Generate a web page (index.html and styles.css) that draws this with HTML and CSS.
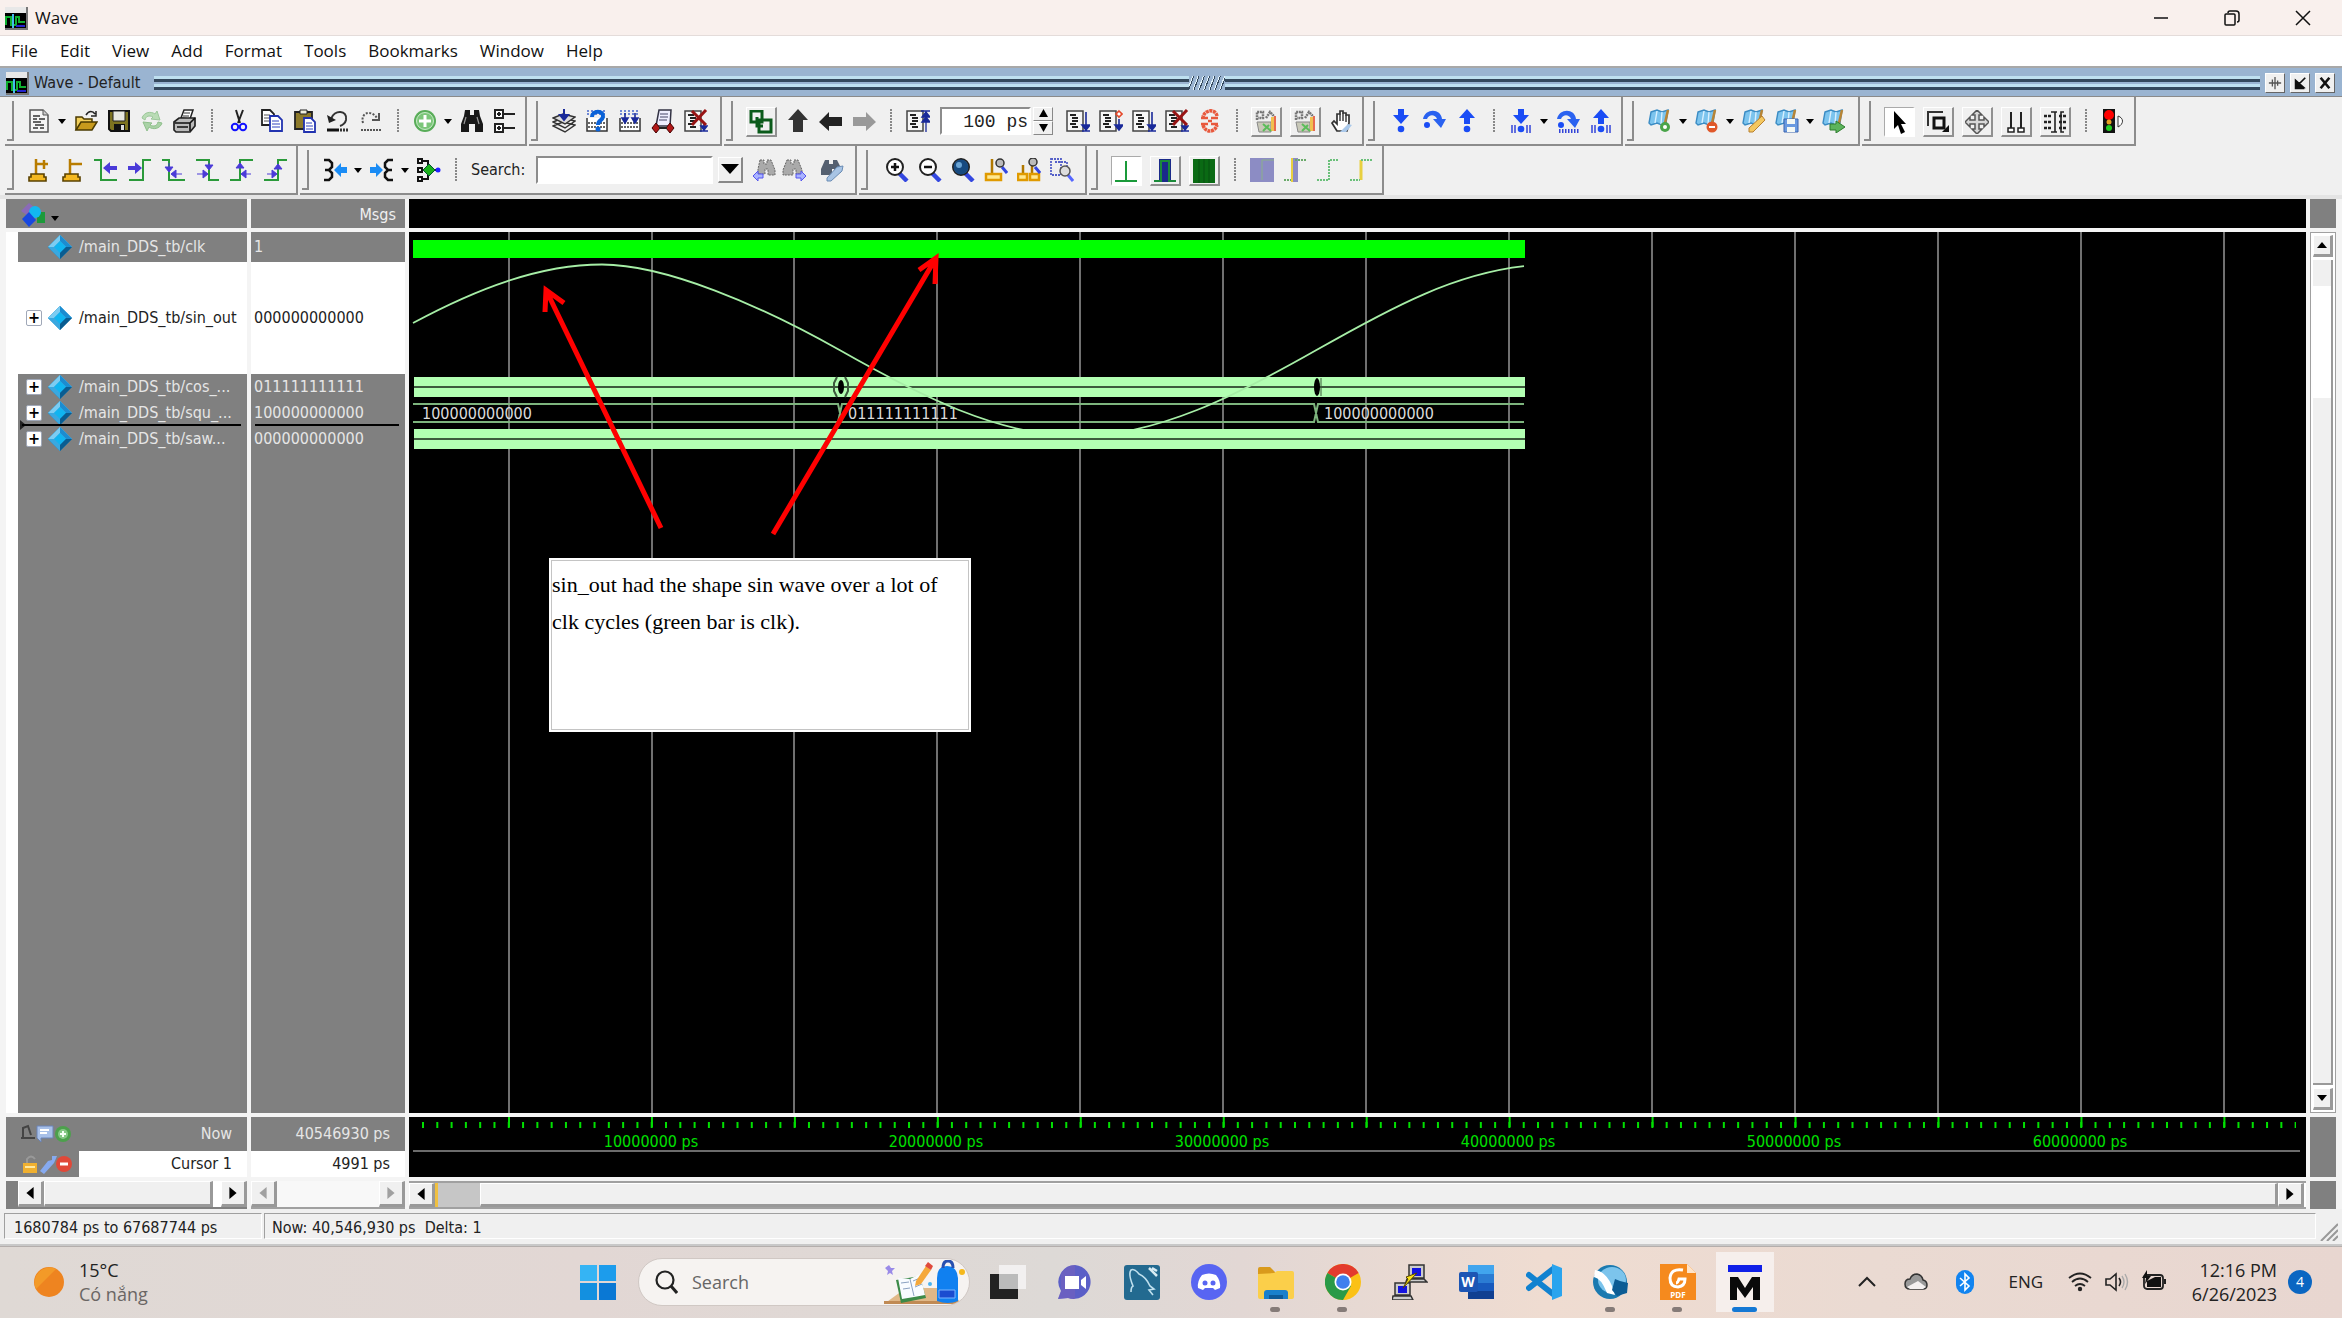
FILE: index.html
```html
<!DOCTYPE html>
<html lang="en">
<head>
<meta charset="utf-8">
<title>Wave</title>
<link rel="stylesheet" href="styles.css">
</head>
<body>
<svg class="sprite" xmlns="http://www.w3.org/2000/svg">
  <symbol id="app" viewBox="0 0 24 24"><path d="M1 1h22v22H1z" fill="#000"/><path d="M1 1h21v6H1z" fill="#e8e8e8"/><path d="M23 1v22H1" fill="none" stroke="#777" stroke-width="2"/><path d="M2 19v-8h5v8h5v-8h3v5h6" fill="none" stroke="#10b030" stroke-width="2"/><path d="M9 8v14" stroke="#4be" stroke-width="2"/><path d="M12 20h9" stroke="#22c" stroke-width="2"/></symbol>
  <symbol id="doc" viewBox="0 0 24 24"><path d="M3 1h13l5 5v17H3z" fill="#f4f4f4" stroke="#555" stroke-width="1.5"/><path d="M16 1v5h5" fill="#ccc" stroke="#555"/><path d="M6 7h7M6 10h4M12 10h6M6 13h8M8 16h9M6 19h5M13 19h4" stroke="#333" stroke-width="1.6"/></symbol>
  <symbol id="caret" viewBox="0 0 10 10"><path d="M1 3h8L5 8z" fill="#000"/></symbol>
  <symbol id="open" viewBox="0 0 24 24"><path d="M2 21V8h6l2 2h8v4" fill="#f2cf5a" stroke="#4a3a00" stroke-width="1.5"/><path d="M2 21l5-8h16l-5 8z" fill="#c79a1c" stroke="#4a3a00" stroke-width="1.5"/><path d="M12 6c3-5 7-4 9-1M22 2v5h-5" fill="none" stroke="#222" stroke-width="1.5"/></symbol>
  <symbol id="save" viewBox="0 0 24 24"><path d="M2 2h20v20H4l-2-2z" fill="#7d7320" stroke="#111" stroke-width="2"/><path d="M6 2h12v10H6z" fill="#e8e8e0" stroke="#222"/><path d="M7 15h11v7H7z" fill="#111"/><path d="M14 16h3v5h-3z" fill="#ddd"/></symbol>
  <symbol id="reload" viewBox="0 0 24 24"><path d="M2 9c2-6 9-7 13-4l2-3 3 9-9-1 2-2C9 6 6 7 5 11z" fill="#b9dcb5" stroke="#9cc79a"/><path d="M22 14c-2 6-9 7-13 4l-2 4-4-9 9 1-2 2c4 2 7 1 8-3z" fill="#a9d2a6" stroke="#8fbf8c"/></symbol>
  <symbol id="print" viewBox="0 0 24 24"><path d="M8 9l3-8h9l-3 9z" fill="#fff" stroke="#222" stroke-width="1.5"/><path d="M11 4h6M10 7h6" stroke="#333"/><path d="M1 13l5-4h16v8l-5 6H3l-2-2z" fill="#bbb" stroke="#222" stroke-width="1.7"/><path d="M2 14h15l5-5M17 14v8M4 18h11" fill="none" stroke="#111" stroke-width="1.6"/></symbol>
  <symbol id="cut" viewBox="0 0 24 24"><path d="M9 1l4 13M16 1l-5 13" stroke="#222" stroke-width="2"/><circle cx="8" cy="18" r="3.2" fill="none" stroke="#11f" stroke-width="2"/><circle cx="16" cy="18" r="3.2" fill="none" stroke="#11f" stroke-width="2"/></symbol>
  <symbol id="copy" viewBox="0 0 24 24"><path d="M2 1h8l4 4v11H2z" fill="#fff" stroke="#222" stroke-width="1.8"/><path d="M4 6h6M4 9h6M4 12h5" stroke="#555"/><path d="M10 7h8l4 4v11H10z" fill="#fff" stroke="#2233b0" stroke-width="1.8"/><path d="M12 12h7M12 15h8M12 18h8" stroke="#3344c0"/></symbol>
  <symbol id="paste" viewBox="0 0 24 24"><path d="M2 3h17v17H2z" fill="#8d7a2a" stroke="#222" stroke-width="1.8"/><path d="M7 1h7v4H7z" fill="#eed" stroke="#222"/><path d="M11 9h7l4 4v10H11z" fill="#fff" stroke="#2233b0" stroke-width="1.8"/><path d="M13 14h6M13 17h7M13 20h7" stroke="#3344c0"/></symbol>
  <symbol id="undo" viewBox="0 0 24 24"><path d="M5 10c3-10 17-9 15 1-1 4-3 5-6 6" fill="none" stroke="#333" stroke-width="2"/><path d="M1 6l2 8 7-3z" fill="#222"/><path d="M1 21h12" stroke="#111" stroke-width="3"/><path d="M14 21h9" stroke="#333" stroke-width="3" stroke-dasharray="2 1"/></symbol>
  <symbol id="redo" viewBox="0 0 24 24"><path d="M4 14C1 4 12 0 18 9" fill="none" stroke="#555" stroke-width="2" stroke-dasharray="2 1.5"/><path d="M20 4v7h-7" fill="none" stroke="#555" stroke-width="2"/><path d="M2 21h21" stroke="#555" stroke-width="2" stroke-dasharray="2 1"/></symbol>
  <symbol id="plus" viewBox="0 0 24 24"><circle cx="12" cy="12" r="11" fill="#58ac58"/><circle cx="12" cy="12" r="8.5" fill="#7cc67a" stroke="#c8ecc8"/><path d="M12 6v12M6 12h12" stroke="#fff" stroke-width="3"/></symbol>
  <symbol id="bino" viewBox="0 0 24 24"><path d="M5 1h5v5h4V1h5l1 6 3 8v8h-8v-8H9v8H1v-8l3-8z" fill="#181818"/><path d="M6 8l-2 7M17 8l2 7" stroke="#999" stroke-width="1.2"/></symbol>
  <symbol id="tree" viewBox="0 0 24 24"><path d="M2 1h8v8H2zM2 15h8v8H2z" fill="#fff" stroke="#222" stroke-width="2"/><path d="M6 3v4M4 5h4M6 17v4M4 19h4M11 5h11M11 19h11" stroke="#222" stroke-width="2"/></symbol>
  <symbol id="stack" viewBox="0 0 24 24"><path d="M1 17l10-4 12 3-10 7zM1 13l10-4 12 3-10 7z" fill="#eee" stroke="#333" stroke-width="1.4"/><path d="M1 9l10-4 12 3-10 7z" fill="#ddd" stroke="#333" stroke-width="1.4"/><path d="M12 0v9M8 6l4 5 4-5z" fill="#1a2a9a" stroke="#1a2a9a" stroke-width="2"/></symbol>
  <symbol id="grid" viewBox="0 0 24 24"><path d="M2 9v13h20V9" fill="#fff" stroke="#333" stroke-width="1.5"/><path d="M3 14h18M3 18h18" stroke="#666" stroke-width="2" stroke-dasharray="2 1"/><path d="M2 2h20M2 5h20" stroke="#4466cc" stroke-dasharray="2 2" stroke-width="1.5"/></symbol>
  <symbol id="gridq" viewBox="0 0 24 24"><use href="#grid"/><path d="M7 8c0-7 12-7 11 0-1 4-5 3-5 8" fill="none" stroke="#0a62d8" stroke-width="4"/><circle cx="13" cy="20" r="2.500" fill="#0a62d8"/></symbol>
  <symbol id="gridd" viewBox="0 0 24 24"><use href="#grid"/><path d="M7 4v8M17 4v8M4 9l3 5 3-5zM14 9l3 5 3-5z" fill="#1a2a9a" stroke="#1a2a9a" stroke-width="1.6"/></symbol>
  <symbol id="scroll" viewBox="0 0 24 24"><path d="M8 1h12l-1 16H5z" fill="#eef" stroke="#334" stroke-width="1.5"/><path d="M9 5h8M9 8h8M8 11h8" stroke="#446"/><path d="M5 14l4 5-4 5-4-5zM19 14l4 5-4 5-4-5z" fill="#b01818" stroke="#400" /><path d="M8 19h8" stroke="#222" stroke-width="2"/></symbol>
  <symbol id="docb" viewBox="0 0 24 24"><path d="M1 2h16v20H1z" fill="#f6f6f6" stroke="#444" stroke-width="1.5"/><path d="M4 6h6M6 9h6M6 12h6M4 15h6M6 18h6" stroke="#222" stroke-width="2"/></symbol>
  <symbol id="run" viewBox="0 0 24 24"><use href="#docb"/><path d="M20 3v16M16 22h8M16 16l4 5 4-5z" fill="#1a2a9a" stroke="#1a2a9a" stroke-width="1.6"/></symbol>
  <symbol id="runup" viewBox="0 0 24 24"><use href="#docb"/><path d="M20 5v18M15 2h9M16 8l4-5 4 5zM16 13l4-5 4 5z" fill="#1a2a9a" stroke="#1a2a9a" stroke-width="1.3"/></symbol>
  <symbol id="runc" viewBox="0 0 24 24"><use href="#docb"/><path d="M20 2l3 3-3 3-3-3z" fill="#fff" stroke="#e4482a" stroke-width="1.6"/><path d="M20 10v9M16 16l4 5 4-5z" fill="#1a2a9a" stroke="#1a2a9a" stroke-width="1.6"/></symbol>
  <symbol id="runx" viewBox="0 0 24 24"><use href="#docb"/><path d="M20 14v6M16 22h8M17 17l3 4 3-4z" fill="#1a2a9a" stroke="#1a2a9a" stroke-width="1.6"/><path d="M8 2l14 14M22 1L8 16" stroke="#981414" stroke-width="3"/></symbol>
  <symbol id="brk" viewBox="0 0 24 24"><path d="M19 7C18 0 7 0 5 8M5 16c2 8 12 8 14 0" fill="none" stroke="#e8583c" stroke-width="3.500" stroke-dasharray="3 .6"/><path d="M3 9h7M13 9h7M3 15h7M13 15h7M10 12h4" stroke="#e8583c" stroke-width="2.500"/></symbol>
  <symbol id="link" viewBox="0 0 24 24"><path d="M2 1h11v11H2zM10 10h12v12H10zM8 7v9h6" fill="none" stroke="#0a5a1a" stroke-width="3"/></symbol>
  <symbol id="aup" viewBox="0 0 24 24"><path d="M12 0l10 11h-5v12H7V11H2z" fill="#333"/></symbol>
  <symbol id="aleft" viewBox="0 0 24 24"><path d="M0 13l10-10v5h13v9H10v5z" fill="#222"/></symbol>
  <symbol id="aright" viewBox="0 0 24 24"><path d="M24 13l-10-10v5H1v9h13v5z" fill="#999"/></symbol>
  <symbol id="prof" viewBox="0 0 24 24"><path d="M3 12h14v10H5z" fill="#c8c8b8" stroke="#888"/><path d="M3 10V2h6v6H4M12 8l4-6 3 3v10" fill="none" stroke="#777" stroke-width="2.500" stroke-dasharray="2 .7"/><path d="M17 7h3v14h-3z" fill="#f0c050"/><path d="M21 6v15" stroke="#e86a50" stroke-width="2"/><path d="M9 14l8 7M9 21l6-6" stroke="#5bbd5b" stroke-width="2"/></symbol>
  <symbol id="hand" viewBox="0 0 24 24"><path d="M7 22L2 14l2-2 3 3V5h3V2h3v2h3v2h3v8l-2 8z" fill="#fff" stroke="#333" stroke-width="1.7"/><path d="M10 5v7M13 4v8M16 6v7" stroke="#333" stroke-width="1.4"/><path d="M10 23l8-8 4 1-6 7z" fill="#a9c8ea"/></symbol>
  <symbol id="sdown" viewBox="0 0 24 24"><path d="M9 0h6v6h5l-8 9-8-9h5z" fill="#1a4cf5"/><circle cx="12" cy="20" r="3.300" fill="#1a4cf5"/></symbol>
  <symbol id="sup" viewBox="0 0 24 24"><path d="M9 15h6V9h5l-8-9-8 9h5z" fill="#1a4cf5"/><circle cx="12" cy="20" r="3.300" fill="#1a4cf5"/></symbol>
  <symbol id="sover" viewBox="0 0 24 24"><path d="M1 10C3-1 19-1 20 10h4l-5 9-8-9h4C13 5 7 5 5 10z" fill="#2a62f0"/><circle cx="5" cy="16" r="3" fill="#1a4cf5"/></symbol>
  <symbol id="bars" viewBox="0 0 24 24"><path d="M3 16v8M6 16v8M18 16v8M21 16v8" stroke="#3344d8" stroke-width="1.500"/></symbol>
  <symbol id="sdownb" viewBox="0 0 24 24"><use href="#sdown"/><use href="#bars"/></symbol>
  <symbol id="supb" viewBox="0 0 24 24"><use href="#sup"/><use href="#bars"/></symbol>
  <symbol id="soverb" viewBox="0 0 24 24"><use href="#sover"/><path d="M3 22h20" stroke="#3344d8" stroke-width="4" stroke-dasharray="1.500 1.500"/></symbol>
  <symbol id="map" viewBox="0 0 24 24"><path d="M3 3l6-2 5 2 6-2-2 13-4 2-5-2-6 2-2-2z" fill="#7cc4ee" stroke="#3b8cc4" stroke-width="1.4"/><path d="M9 2L7 14M14 3l-1 12" stroke="#d8f0ff" stroke-width="1.400"/><path d="M20 1l-3 13" stroke="#b88434" stroke-width="2.500"/></symbol>
  <symbol id="mapadd" viewBox="0 0 24 24"><use href="#map"/><circle cx="17" cy="18" r="5" fill="#4aa44a"/><circle cx="17" cy="18" r="2" fill="#fff"/></symbol>
  <symbol id="mapdel" viewBox="0 0 24 24"><use href="#map"/><circle cx="17" cy="18" r="5.500" fill="#e0582a"/><path d="M14 18h6" stroke="#fff" stroke-width="2"/></symbol>
  <symbol id="mapedit" viewBox="0 0 24 24"><use href="#map"/><path d="M7 19L20 7l3 4-12 12H7z" fill="#f4c860" stroke="#b88030"/></symbol>
  <symbol id="mapsave" viewBox="0 0 24 24"><use href="#map"/><path d="M9 10h14v13H9z" fill="#6a9ae0" stroke="#3a64b0"/><path d="M12 10h8v5h-8zM12 18h8v5h-8z" fill="#f4f8f4"/></symbol>
  <symbol id="mapgo" viewBox="0 0 24 24"><use href="#map"/><path d="M8 15h6v-3l9 6-9 6v-3H8z" fill="#5cb45c" stroke="#2d7c2d"/></symbol>
  <symbol id="ptr" viewBox="0 0 24 24"><path d="M7 1l12 13h-5l4 8-4 2-3-9-4 4z" fill="#000"/></symbol>
  <symbol id="zoomm" viewBox="0 0 24 24"><path d="M2 16V2h15" fill="none" stroke="#333" stroke-width="2"/><path d="M8 8h10v10H8z" fill="none" stroke="#111" stroke-width="3"/><path d="M16 22h7v-7z" fill="#111"/></symbol>
  <symbol id="pan" viewBox="0 0 24 24"><path d="M12 0l5 5h-3v5h5V7l5 5-5 5v-3h-5v5h3l-5 5-5-5h3v-5H5v3l-5-5 5-5v3h5V5H7z" fill="#d8d8d8" stroke="#555" stroke-width="1.500"/></symbol>
  <symbol id="two" viewBox="0 0 24 24"><path d="M7 2v16M17 2v16" stroke="#222" stroke-width="2"/><path d="M4 18h6v4H4zM14 18h6v4h-6z" fill="#fff" stroke="#222" stroke-width="1.500"/></symbol>
  <symbol id="three" viewBox="0 0 24 24"><path d="M8 2h6M12 2v20M8 22h6M21 2h-3v20h3" fill="none" stroke="#222" stroke-width="1.600"/><path d="M1 6h8M1 12h8M1 18h8M16 6h7M16 12h7M16 18h7" stroke="#222" stroke-width="2.500" stroke-dasharray="3 1"/></symbol>
  <symbol id="light" viewBox="0 0 24 24"><path d="M2 0h12v24H2z" fill="#111"/><circle cx="8" cy="6" r="5" fill="#f00"/><circle cx="8" cy="13" r="2.500" fill="#e8a020"/><circle cx="8" cy="19" r="3" fill="#2c2"/><path d="M17 7c6 2 6 8 0 11z" fill="#fff" stroke="#333"/></symbol>
  <symbol id="cadd" viewBox="0 0 24 24"><path d="M10 1v15M10 6h12M18 2v9" stroke="#b87c00" stroke-width="2.500"/><path d="M5 16h13v3h2v4H3v-4h2z" fill="#f4b820" stroke="#5a4200" stroke-width="1.600"/></symbol>
  <symbol id="cdel" viewBox="0 0 24 24"><path d="M10 1v15M10 6h12" stroke="#b87c00" stroke-width="2.500"/><path d="M5 16h13v3h2v4H3v-4h2z" fill="#f4b820" stroke="#5a4200" stroke-width="1.600"/></symbol>
  <symbol id="e1" viewBox="0 0 24 24"><path d="M0 2h7v20h16" fill="none" stroke="#2a9a3a" stroke-width="2"/><path d="M9 10l7-6v4h7v4h-7v4z" fill="#4a3ad8"/></symbol>
  <symbol id="e2" viewBox="0 0 24 24"><path d="M1 22h14V2h8" fill="none" stroke="#2a9a3a" stroke-width="2"/><path d="M14 10L7 4v4H0v4h7v4z" fill="#4a3ad8"/></symbol>
  <symbol id="e3" viewBox="0 0 24 24"><path d="M0 2h7v20h16" fill="none" stroke="#2a9a3a" stroke-width="2"/><path d="M7 5v7M3 9h8l-4 5zM20 16h-9M14 12v8l-5-4z" fill="#4a3ad8" stroke="#4a3ad8"/></symbol>
  <symbol id="e4" viewBox="0 0 24 24"><path d="M0 2h13v20h10" fill="none" stroke="#2a9a3a" stroke-width="2"/><path d="M13 5v5M9 7h8l-4 5zM1 16h7M7 12v8l5-4z" fill="#4a3ad8" stroke="#4a3ad8"/></symbol>
  <symbol id="e5" viewBox="0 0 24 24"><path d="M0 22h10V2h13" fill="none" stroke="#2a9a3a" stroke-width="2"/><path d="M6 10h8l-4-5zM21 16h-7M16 12v8l-5-4z" fill="#4a3ad8" stroke="#4a3ad8"/></symbol>
  <symbol id="e6" viewBox="0 0 24 24"><path d="M0 22h14V2h9" fill="none" stroke="#2a9a3a" stroke-width="2"/><path d="M10 11h8l-4-5zM3 16h6M8 12v8l5-4z" fill="#4a3ad8" stroke="#4a3ad8"/></symbol>
  <symbol id="b1" viewBox="0 0 24 24"><path d="M1 2h5l3 3v4l-3 3H2h4l3 3v4l-3 3H1" fill="none" stroke="#111" stroke-width="2.500"/><path d="M11 12l7-7v4h6v6h-6v4z" fill="#1a8cf5"/></symbol>
  <symbol id="b2" viewBox="0 0 24 24"><path d="M23 2h-5l-3 3v4l3 3h4-4l-3 3v4l3 3h5" fill="none" stroke="#111" stroke-width="2.500"/><path d="M13 12L6 5v4H0v6h6v4z" fill="#1a8cf5"/></symbol>
  <symbol id="b3" viewBox="0 0 24 24"><path d="M1 1h4v4H1zM1 10h4v4H1zM1 19h4v4H1zM5 3h6v18H5M5 12h16" fill="none" stroke="#111" stroke-width="2"/><path d="M12 6l6 6-6 6-6-6z" fill="#1bb01b" stroke="#053"/><circle cx="21" cy="12" r="2.500" fill="#22f"/></symbol>
  <symbol id="fprev" viewBox="0 0 24 24"><path d="M8 2h4v4h3V2h4l4 10v5h-7v-6h-3v5H6v-5z" fill="#aaa" stroke="#666" stroke-dasharray="2 1"/><path d="M1 18l5-5v3h5v4H6v3z" fill="#aab4ff" stroke="#55e"/></symbol>
  <symbol id="fnext" viewBox="0 0 24 24"><path d="M5 2h4v4h3V2h4l4 10v4h-6v-5h-3v6H1v-5z" fill="#aaa" stroke="#666" stroke-dasharray="2 1"/><path d="M24 18l-5-5v3h-5v4h5v3z" fill="#aab4ff" stroke="#55e"/></symbol>
  <symbol id="fopt" viewBox="0 0 24 24"><path d="M5 2h4v4h4V2h4l4 8v5h-7v-4h-2v6H1v-6z" fill="#556070"/><path d="M7 20L17 9l6-1-1 5L11 23H7z" fill="#a8c4e4" stroke="#6a8cb4"/></symbol>
  <symbol id="mag" viewBox="0 0 24 24"><path d="M14 15l8 8" stroke="#3347e0" stroke-width="4.500"/><circle cx="10" cy="9" r="8" fill="#fff" stroke="#222" stroke-width="2"/></symbol>
  <symbol id="zin" viewBox="0 0 24 24"><use href="#mag"/><path d="M10 5v8M6 9h8" stroke="#111" stroke-width="2.500"/></symbol>
  <symbol id="zout" viewBox="0 0 24 24"><use href="#mag"/><path d="M6 9h8" stroke="#111" stroke-width="2.500"/></symbol>
  <symbol id="zfull" viewBox="0 0 24 24"><use href="#mag"/><circle cx="10" cy="9" r="7.500" fill="#174a80"/><circle cx="8" cy="7" r="3" fill="#6aa4d4"/></symbol>
  <symbol id="zcur" viewBox="0 0 24 24"><path d="M8 1v15" stroke="#b07800" stroke-width="2.500"/><path d="M2 16h15v6H2z" fill="#ffe890" stroke="#e09a00" stroke-width="2.500"/><path d="M18 9l5 6" stroke="#3347e0" stroke-width="3"/><circle cx="16" cy="5" r="4" fill="#bbb" stroke="#333" stroke-width="1.500"/></symbol>
  <symbol id="zcur2" viewBox="0 0 24 24"><path d="M6 7v9M15 6v10" stroke="#b07800" stroke-width="2.500"/><path d="M1 16h9v6H1zM13 16h9v6h-9z" fill="#ffe890" stroke="#e09a00" stroke-width="2.500"/><path d="M18 9l5 6" stroke="#3347e0" stroke-width="3"/><circle cx="16" cy="4" r="4" fill="#bbb" stroke="#333" stroke-width="1.500"/></symbol>
  <symbol id="zsel" viewBox="0 0 24 24"><path d="M1 1h10v16H1zM5 4h12v6" fill="none" stroke="#5560c8" stroke-width="1.800" stroke-dasharray="2 1"/><path d="M18 17l5 6" stroke="#5566ff" stroke-width="3"/><circle cx="15" cy="13" r="5" fill="#ddd" stroke="#555" stroke-width="1.500"/></symbol>
  <symbol id="w1" viewBox="0 0 24 24"><path d="M12 2v20M1 22h22" stroke="#1a9a3a" stroke-width="2"/></symbol>
  <symbol id="w2" viewBox="0 0 24 24"><path d="M6 0h12v23H6z" fill="#1a2a8a"/><path d="M1 22h7V2h8v20h7" fill="none" stroke="#1a8a3a" stroke-width="2"/></symbol>
  <symbol id="w3" viewBox="0 0 24 24"><path d="M1 0h22v24H1z" fill="#0a6a14"/><path d="M7 0v24M12 0v24M17 0v24" stroke="#075010"/></symbol>
  <symbol id="w4" viewBox="0 0 24 24"><path d="M0 0h24v24H0z" fill="#8c8cc4"/><path d="M12 22V2h12" fill="none" stroke="#8ab08a"/></symbol>
  <symbol id="w5" viewBox="0 0 24 24"><path d="M9 0h6v24H9z" fill="#8c8cc4"/><path d="M9 0v24" stroke="#e8d040" stroke-width="2"/><path d="M1 22h7M12 2h11" stroke="#6aaa6a" stroke-width="2" stroke-dasharray="2 1"/></symbol>
  <symbol id="w6" viewBox="0 0 24 24"><path d="M1 22h12V2h10" fill="none" stroke="#6ac07a" stroke-width="2" stroke-dasharray="2 1"/></symbol>
  <symbol id="w7" viewBox="0 0 24 24"><path d="M12 22V2" stroke="#e8d040" stroke-width="3"/><path d="M1 22h10M12 2h11" stroke="#6ac07a" stroke-width="2" stroke-dasharray="2 1"/></symbol>
  <symbol id="gem" viewBox="0 0 24 24"><path d="M12 0l12 12-12 12L0 12z" fill="#0e86c8"/><path d="M12 0v24L0 12z" fill="#3aa8e0"/><path d="M12 0l12 12h-6l-6-6-6 6H0z" fill="#7cccf2"/><path d="M12 0l12 12h-6l-6-6z" fill="#1c8cd0"/><path d="M12 6l6 6-6 6-6-6z" fill="#10b4f0"/><path d="M18 12h6L12 24v-6z" fill="#0a5c90"/></symbol>
</svg>

<header class="titlebar">
  <svg class="appico"><use href="#app"/></svg><h1>Wave</h1>
  <div class="winctl">
    <button aria-label="Minimize"><svg viewBox="0 0 16 16"><path d="M1 8h14" stroke="#111" stroke-width="1.500"/></svg></button>
    <button aria-label="Restore"><svg viewBox="0 0 16 16"><path d="M1 5q0-1 1-1h8q1 0 1 1v9q0 1-1 1H2q-1 0-1-1zM4 3q0-2 2-2h6q3 0 3 3v6q0 2-2 2" fill="none" stroke="#111" stroke-width="1.500"/></svg></button>
    <button aria-label="Close"><svg viewBox="0 0 16 16"><path d="M1 1l14 14M15 1L1 15" stroke="#111" stroke-width="1.500"/></svg></button>
  </div>
</header>
<nav class="menu">
  <button>File</button><button>Edit</button><button>View</button><button>Add</button><button>Format</button><button>Tools</button><button>Bookmarks</button><button>Window</button><button>Help</button>
</nav>

<div class="dock">
  <svg class="appico"><use href="#app"/></svg><h2>Wave - Default</h2>
  <div class="grip"><span></span></div>
  <button aria-label="Undock"><svg viewBox="0 0 16 16"><path d="M8 1v14M1 8h14M5 4v8M11 5v6" stroke="#555" stroke-width="1.500"/></svg></button>
  <button aria-label="Zoom window"><svg viewBox="0 0 16 16"><path d="M14 2L6 10M3 5v8h9zM3 5v9h10" fill="#111" stroke="#111" stroke-width="2"/></svg></button>
  <button aria-label="Close pane"><svg viewBox="0 0 16 16"><path d="M3 2l10 12M13 2L3 14" stroke="#111" stroke-width="3"/></svg></button>
</div>

<div class="toolbars">
  <div class="row">
    <div class="group g522">
      <button class="tb" aria-label="New"><svg><use href="#doc"/></svg></button><button class="car" aria-label="New options"><svg><use href="#caret"/></svg></button>
      <button class="tb" aria-label="Open"><svg><use href="#open"/></svg></button><button class="tb" aria-label="Save"><svg><use href="#save"/></svg></button><button class="tb" aria-label="Reload"><svg><use href="#reload"/></svg></button><button class="tb" aria-label="Print"><svg><use href="#print"/></svg></button><i class="sep"></i>
      <button class="tb" aria-label="Cut"><svg><use href="#cut"/></svg></button><button class="tb" aria-label="Copy"><svg><use href="#copy"/></svg></button><button class="tb" aria-label="Paste"><svg><use href="#paste"/></svg></button><button class="tb" aria-label="Undo"><svg><use href="#undo"/></svg></button><button class="tb" aria-label="Redo"><svg><use href="#redo"/></svg></button><i class="sep"></i>
      <button class="tb" aria-label="Add"><svg><use href="#plus"/></svg></button><button class="car" aria-label="Add options"><svg><use href="#caret"/></svg></button><button class="tb" aria-label="Find"><svg><use href="#bino"/></svg></button><button class="tb" aria-label="Collapse"><svg><use href="#tree"/></svg></button>
    </div>
    <div class="group g193">
      <button class="tb" aria-label="Compile"><svg><use href="#stack"/></svg></button><button class="tb" aria-label="Compile out-of-date"><svg><use href="#gridq"/></svg></button><button class="tb" aria-label="Compile all"><svg><use href="#gridd"/></svg></button><button class="tb" aria-label="Simulate"><svg><use href="#scroll"/></svg></button><button class="tb" aria-label="Break compile"><svg><use href="#runx"/></svg></button>
    </div>
    <div class="group g640">
      <button class="tb up" aria-label="Environment"><svg><use href="#link"/></svg></button><button class="tb" aria-label="Up"><svg><use href="#aup"/></svg></button><button class="tb" aria-label="Back"><svg><use href="#aleft"/></svg></button><button class="tb" aria-label="Forward"><svg><use href="#aright"/></svg></button><i class="sep"></i>
      <button class="tb" aria-label="Restart"><svg><use href="#runup"/></svg></button>
      <input class="len" type="text" value="100 ps" aria-label="Run length">
      <span class="spin"><button aria-label="Increase"><svg viewBox="0 0 10 10"><path d="M0 9h10L5 0z"/></svg></button><button aria-label="Decrease"><svg viewBox="0 0 10 10"><path d="M0 1h10L5 10z"/></svg></button></span>
      <button class="tb" aria-label="Run"><svg><use href="#run"/></svg></button><button class="tb" aria-label="Continue"><svg><use href="#runc"/></svg></button><button class="tb" aria-label="Run all"><svg><use href="#run"/></svg></button><button class="tb" aria-label="Break"><svg><use href="#runx"/></svg></button><button class="tb" aria-label="Stop"><svg><use href="#brk"/></svg></button><i class="sep"></i>
      <button class="tb up" aria-label="Performance profile"><svg><use href="#prof"/></svg></button><button class="tb up" aria-label="Memory profile"><svg><use href="#prof"/></svg></button><button class="tb" aria-label="Edit"><svg><use href="#hand"/></svg></button>
    </div>
    <div class="group g257">
      <button class="tb" aria-label="Step into"><svg><use href="#sdown"/></svg></button><button class="tb" aria-label="Step over"><svg><use href="#sover"/></svg></button><button class="tb" aria-label="Step out"><svg><use href="#sup"/></svg></button><i class="sep"></i><button class="tb" aria-label="Step into instance"><svg><use href="#sdownb"/></svg></button><button class="car" aria-label="Step options"><svg><use href="#caret"/></svg></button><button class="tb" aria-label="Step over instance"><svg><use href="#soverb"/></svg></button><button class="tb" aria-label="Step out instance"><svg><use href="#supb"/></svg></button>
    </div>
    <div class="group g235">
      <button class="tb" aria-label="Add bookmark"><svg><use href="#mapadd"/></svg></button><button class="car" aria-label="Add bookmark options"><svg><use href="#caret"/></svg></button><button class="tb" aria-label="Delete bookmark"><svg><use href="#mapdel"/></svg></button><button class="car" aria-label="Delete bookmark options"><svg><use href="#caret"/></svg></button><button class="tb" aria-label="Manage bookmarks"><svg><use href="#mapedit"/></svg></button><button class="tb" aria-label="Save bookmarks"><svg><use href="#mapsave"/></svg></button><button class="car" aria-label="Save bookmark options"><svg><use href="#caret"/></svg></button><button class="tb" aria-label="Jump to bookmark"><svg><use href="#mapgo"/></svg></button>
    </div>
    <div class="group g274">
      <button class="tb down" aria-label="Select mode"><svg><use href="#ptr"/></svg></button><button class="tb up" aria-label="Zoom mode"><svg><use href="#zoomm"/></svg></button><button class="tb up" aria-label="Pan mode"><svg><use href="#pan"/></svg></button><button class="tb up" aria-label="Two cursor mode"><svg><use href="#two"/></svg></button><button class="tb up" aria-label="Edit mode"><svg><use href="#three"/></svg></button><i class="sep"></i><button class="tb" aria-label="Stop drawing"><svg><use href="#light"/></svg></button>
    </div>
  </div>
  <div class="row">
    <div class="group g293 wide">
      <button class="tb" aria-label="Insert cursor"><svg><use href="#cadd"/></svg></button><button class="tb" aria-label="Delete cursor"><svg><use href="#cdel"/></svg></button><button class="tb" aria-label="Previous transition"><svg><use href="#e1"/></svg></button><button class="tb" aria-label="Next transition"><svg><use href="#e2"/></svg></button><button class="tb" aria-label="Previous falling edge"><svg><use href="#e3"/></svg></button><button class="tb" aria-label="Next falling edge"><svg><use href="#e4"/></svg></button><button class="tb" aria-label="Previous rising edge"><svg><use href="#e5"/></svg></button><button class="tb" aria-label="Next rising edge"><svg><use href="#e6"/></svg></button>
    </div>
    <div class="group g557">
      <button class="tb" aria-label="Drivers"><svg><use href="#b1"/></svg></button><button class="car" aria-label="Driver options"><svg><use href="#caret"/></svg></button><button class="tb" aria-label="Readers"><svg><use href="#b2"/></svg></button><button class="car" aria-label="Reader options"><svg><use href="#caret"/></svg></button><button class="tb" aria-label="Dataflow"><svg><use href="#b3"/></svg></button><i class="sep"></i>
      <label for="find">Search:</label><input id="find" class="find" type="text">
      <button class="drop" aria-label="Search history"><svg viewBox="0 0 18 10"><path d="M0 0h18L9 10z"/></svg></button>
      <button class="tb nar" aria-label="Search backward"><svg><use href="#fprev"/></svg></button><button class="tb nar" aria-label="Search forward"><svg><use href="#fnext"/></svg></button><button class="tb" aria-label="Search options"><svg><use href="#fopt"/></svg></button>
    </div>
    <div class="group g228">
      <button class="tb" aria-label="Zoom in"><svg><use href="#zin"/></svg></button><button class="tb" aria-label="Zoom out"><svg><use href="#zout"/></svg></button><button class="tb" aria-label="Zoom full"><svg><use href="#zfull"/></svg></button><button class="tb" aria-label="Zoom on cursor"><svg><use href="#zcur"/></svg></button><button class="tb" aria-label="Zoom between cursors"><svg><use href="#zcur2"/></svg></button><button class="tb" aria-label="Zoom other window"><svg><use href="#zsel"/></svg></button>
    </div>
    <div class="group g295">
      <button class="tb down" aria-label="Leading line"><svg><use href="#w1"/></svg></button><button class="tb up" aria-label="Leading box"><svg><use href="#w2"/></svg></button><button class="tb up" aria-label="Full box"><svg><use href="#w3"/></svg></button><i class="sep"></i><button class="tb" aria-label="Shade"><svg><use href="#w4"/></svg></button><button class="tb" aria-label="Active edge"><svg><use href="#w5"/></svg></button><button class="tb" aria-label="Edge"><svg><use href="#w6"/></svg></button><button class="tb" aria-label="Marked edge"><svg><use href="#w7"/></svg></button>
    </div>
  </div>
</div>

<main class="panes">
  <div class="head">
    <svg class="shapes" viewBox="0 0 26 24"><path d="M9 0l7 6-8 7-7-5z" fill="#8a6ab8"/><path d="M17 9h8v11h-8z" fill="#1c9a3a"/><circle cx="15" cy="9" r="6" fill="#12b8f0"/><path d="M9 9l7 8-7 7-7-8z" fill="#1848e0"/></svg><svg class="dd"><use href="#caret"/></svg>
  </div>
  <div class="head right">Msgs</div>
  <div class="black"></div>
  <div class="gray"></div>

  <ul class="names">
    <li class="clk"><span class="box none"></span><svg class="gem"><use href="#gem"/></svg>/main_DDS_tb/clk</li>
    <li class="sin"><button class="box" aria-label="Expand sin_out">+</button><svg class="gem"><use href="#gem"/></svg>/main_DDS_tb/sin_out</li>
    <li><button class="box" aria-label="Expand cos">+</button><svg class="gem"><use href="#gem"/></svg>/main_DDS_tb/cos_...</li>
    <li class="ins"><button class="box" aria-label="Expand squ">+</button><svg class="gem"><use href="#gem"/></svg>/main_DDS_tb/squ_...</li>
    <li><button class="box" aria-label="Expand saw">+</button><svg class="gem"><use href="#gem"/></svg>/main_DDS_tb/saw...</li>
  </ul>
  <ul class="values">
    <li class="clk">1</li><li class="sin">000000000000</li><li>011111111111</li><li class="ins">100000000000</li><li>000000000000</li>
  </ul>
  <div class="wave">
    <svg class="plot">
      <g stroke="#707070" stroke-width="2">
        <line x1="100" x2="100" y2="100%"/><line x1="243" x2="243" y2="100%"/><line x1="385" x2="385" y2="100%"/><line x1="528" x2="528" y2="100%"/><line x1="671" x2="671" y2="100%"/><line x1="814" x2="814" y2="100%"/><line x1="957" x2="957" y2="100%"/><line x1="1100" x2="1100" y2="100%"/><line x1="1243" x2="1243" y2="100%"/><line x1="1386" x2="1386" y2="100%"/><line x1="1529" x2="1529" y2="100%"/><line x1="1672" x2="1672" y2="100%"/><line x1="1815" x2="1815" y2="100%"/>
      </g>
      <rect x="4" y="8" width="1112" height="18" fill="#00ff00"/>
      <path d="M5 145h1111v20H5z" fill="#b2ffb2"/><path d="M5 155h1111" stroke="#3d5a3d" stroke-width="2"/>
      <g fill="none" stroke="#3d5a3d" stroke-width="2"><path d="M428 145l-3 6v8l3 6M436 145l3 6v8l-3 6"/></g>
      <ellipse cx="432" cy="155" rx="3" ry="7" fill="#000"/><ellipse cx="908" cy="155" rx="3" ry="9" fill="#000"/><path d="M912 146v18" stroke="#3d5a3d"/>
      <path d="M4 172h425l4 18h472l4-18h206M4 190h425l4-18h472l4 18h206" fill="none" stroke="#7db47d" stroke-width="2"/>
      <g class="bus"><text x="13" y="187">100000000000</text><text x="439" y="187">011111111111</text><text x="915" y="187">100000000000</text></g>
      <path d="M4 91C67 57.200 130 32.500 193 32.500S352 73.400 431 118.300 590 204.100 669 204.100 828 163.200 907 118.300 1046 41.900 1115 34.200" fill="none" stroke="#a6eea6" stroke-width="1.800"/>
      <path d="M5 197h1111v20H5z" fill="#b2ffb2"/><path d="M5 207h1111" stroke="#3d5a3d" stroke-width="2"/>
      <g fill="none" stroke="#f00" stroke-width="5"><path d="M252 296L137 58M136 80l1-22 18 13M364 302L527 26M510 38l17-12-1 26"/></g>
    </svg>
    <p class="note">sin_out had the shape sin wave over a lot of clk cycles (green bar is clk).</p>
  </div>
  <div class="vscroll">
    <button aria-label="Scroll up"><svg viewBox="0 0 10 6"><path d="M0 6h10L5 0z"/></svg></button>
    <div class="thumb"><span></span></div>
    <button aria-label="Scroll down"><svg viewBox="0 0 10 6"><path d="M0 0h10L5 6z"/></svg></button>
  </div>

  <div class="foot">
    <div class="now"><svg class="three" viewBox="0 0 52 20"><path d="M3 14V4l5-2 3 9M1 14h14" fill="none" stroke="#444" stroke-width="2"/><path d="M17 2h16v12H21v4l-4-4z" fill="#a8c0e8" stroke="#6a84b8"/><path d="M20 6h9M20 9h7" stroke="#fff" stroke-width="2"/><circle cx="43" cy="10" r="8" fill="#4ca04c"/><circle cx="43" cy="10" r="5" fill="#86c886"/><path d="M43 7v6M40 10h6" stroke="#f4fff4" stroke-width="2"/></svg><span>Now</span></div>
    <div class="cur"><svg class="three" viewBox="0 0 52 20"><path d="M7 9V5q4-5 8 0" fill="none" stroke="#999" stroke-width="2"/><path d="M3 9h14v10H3z" fill="#f0b030"/><path d="M5 13h10" stroke="#ffe8a0" stroke-width="2"/><path d="M20 17l8-10 4-1V2l5 0-3 7-10 11z" fill="#86aaf0"/><circle cx="44" cy="10" r="8" fill="#e04838"/><path d="M40 10h8" stroke="#fff" stroke-width="3"/></svg><span>Cursor 1</span></div>
  </div>
  <div class="foot"><div class="now"><span>40546930 ps</span></div><div class="cur"><span>4991 ps</span></div></div>
  <div class="black">
    <svg class="ruler">
      <path d="M13 8h1874" stroke="#00e000" stroke-width="6" stroke-dasharray="2 12.295"/>
      <path d="M99 5h1720" stroke="#00e000" stroke-width="10" stroke-dasharray="2 140.950"/>
      <line x1="4" x2="1891" y1="34" y2="34" stroke="#6c6c6c" stroke-width="2"/>
      <g class="times"><text x="242" y="30">10000000 ps</text><text x="527" y="30">20000000 ps</text><text x="813" y="30">30000000 ps</text><text x="1099" y="30">40000000 ps</text><text x="1385" y="30">50000000 ps</text><text x="1671" y="30">60000000 ps</text></g>
    </svg>
  </div>
  <div class="gray"></div>

  <div class="hs first"><button aria-label="Scroll left"><svg viewBox="0 0 6 10"><path d="M6 0v10L0 5z"/></svg></button><span class="thumb"></span><i class="gap"></i><button aria-label="Scroll right"><svg viewBox="0 0 6 10"><path d="M0 0v10l6-5z"/></svg></button></div>
  <div class="hs off"><button disabled aria-label="Scroll left"><svg viewBox="0 0 6 10"><path d="M6 0v10L0 5z"/></svg></button><span class="trough"></span><button disabled aria-label="Scroll right"><svg viewBox="0 0 6 10"><path d="M0 0v10l6-5z"/></svg></button></div>
  <div class="hs main"><button aria-label="Scroll left"><svg viewBox="0 0 6 10"><path d="M6 0v10L0 5z"/></svg></button><i class="mark"></i><span class="thumb"></span><button aria-label="Scroll right"><svg viewBox="0 0 6 10"><path d="M0 0v10l6-5z"/></svg></button></div>
  <div class="gray"></div>
</main>

<div class="status"><span class="range">1680784 ps to 67687744 ps</span><span class="info">Now: 40,546,930 ps&nbsp; Delta: 1</span><svg viewBox="0 0 18 18"><path d="M1 18L18 1M7 18L18 7M13 18l5-5" stroke="#999" stroke-width="2"/></svg></div>

<footer class="taskbar">
  <div class="weather"><svg viewBox="0 0 30 30"><circle cx="15" cy="15" r="15" fill="#ee8420"/><path d="M2 22A15 15 0 0 1 22 2z" fill="#f39a28"/></svg><p>15°C<br><span>Có nắng</span></p></div>
  <div class="apps">
    <button class="app" aria-label="Start"><svg viewBox="0 0 36 36"><path d="M0 1h17v16H0z" fill="#35b4f4"/><path d="M19 1h17v16H19z" fill="#1c9cec"/><path d="M0 19h17v17H0z" fill="#1390e0"/><path d="M19 19h17v17H19z" fill="#0a78d4"/></svg></button>
    <label class="search"><svg class="lens" viewBox="0 0 24 24"><circle cx="11" cy="10" r="8.500" fill="none" stroke="#222" stroke-width="2.200"/><path d="M17 16l6 7" stroke="#222" stroke-width="3"/></svg><input type="text" placeholder="Search" aria-label="Search"><svg class="art" viewBox="0 0 84 44"><path d="M2 44l22-16h42l14 16z" fill="#e0b888"/><path d="M2 41h76v3H2z" fill="#c08a54"/><path d="M14 20l24-4 6 22-25 5z" fill="#3c8a48"/><path d="M16 18l12 1 10-5 5 21-11 2-12 2z" fill="#f8fbff"/><path d="M28 19l4 17M19 23l8-1M31 21l7-3M21 29l7-1M33 27l7-3" stroke="#8aa0c0"/><path d="M34 21l10-15 5 4-10 14-6 2z" fill="#f5a83a"/><path d="M43 6l3-4 5 4-2 4z" fill="#e04a3c"/><path d="M55 41V18q0-12 10-12t11 12v23q-10 4-21 0z" fill="#1080f0"/><path d="M61 8q0-7 5-7t5 7" fill="none" stroke="#2850b0" stroke-width="3"/><path d="M57 30h16v8H57z" fill="#1b4cd0" stroke="#7ab4ff"/><path d="M7 5l2 3 4 0-3 3 1 4-3-2-3 2 1-4-3-3z" fill="#9a8ae8"/><circle cx="80" cy="12" r="3" fill="#f5b81c"/><circle cx="48" cy="24" r="2" fill="#4ab4f0"/></svg></label>
    <button class="app" aria-label="Task view"><svg viewBox="0 0 36 36"><path d="M0 10h28v25H0z" fill="#222"/><path d="M9 1h27v24H9z" fill="#f2f0f0"/><path d="M9 10h19v15H9z" fill="#bbb"/></svg></button>
    <button class="app" aria-label="Chat"><svg viewBox="0 0 36 36"><path d="M18 1a17 17 0 1 1-7 33l-10 1 3-8A17 17 0 0 1 18 1z" fill="#5b5fc7"/><path d="M4 10A17 17 0 0 1 18 1v34a17 17 0 0 1-7-1l-10 1 3-8z" fill="#7a62bc" opacity=".5"/><path d="M8 12h14v13H8zM24 16l5-4v13l-5-4z" fill="#fff"/></svg></button>
    <button class="app" aria-label="MySQL Workbench"><svg viewBox="0 0 36 36"><rect y="1" width="36" height="35" rx="3" fill="#236a90"/><path d="M7 28q0-5 2-6Q4 10 7 6q3-2 8 4 7 3 11 12l4 3-5 1 4 5" fill="none" stroke="#bfe0ee" stroke-width="1.600"/><path d="M25 4l8 8M28 4l5 3" stroke="#d8ecf4" stroke-width="2.500"/></svg></button>
    <button class="app" aria-label="Discord"><svg viewBox="0 0 36 36"><circle cx="18" cy="18" r="18" fill="#5865f2"/><path d="M11 11q7-3 14 0 5 6 4 13l-5 2-2-2h-8l-2 2-5-2q-1-7 4-13z" fill="#fff"/><circle cx="14" cy="19" r="2.500" fill="#5865f2"/><circle cx="22" cy="19" r="2.500" fill="#5865f2"/></svg></button>
    <button class="app on" aria-label="File Explorer"><svg viewBox="0 0 36 36"><path d="M0 5q0-2 2-2h10l5 5v6H0z" fill="#d99a1c"/><path d="M0 10l16-1 3-2h15q2 0 2 2v24q0 2-2 2H2q-2 0-2-2z" fill="#fbcf4a"/><path d="M6 35v-6q0-3 3-3h18q3 0 3 3v6z" fill="#1a80cc"/><path d="M11 31h14v4H11z" fill="#0e5a98"/></svg></button>
    <button class="app on" aria-label="Chrome"><svg viewBox="0 0 36 36"><circle cx="18" cy="18" r="18" fill="#fbc116"/><path d="M18 18L2.400 9A18 18 0 0 1 33.600 9z" fill="#e33b2e"/><path d="M18 18L2.400 9A18 18 0 0 0 18 36l8-14z" fill="#2a9a48"/><circle cx="18" cy="18" r="8.500" fill="#fff"/><circle cx="18" cy="18" r="6.800" fill="#3f7fee"/></svg></button>
    <button class="app" aria-label="PuTTY"><svg viewBox="0 0 36 36"><path d="M17 1h15v13H17zM15 15h17l3 3H14zM3 19h15v12H3zM1 32h18l2 4H0z" fill="#ccc" stroke="#333" stroke-width="1.500"/><path d="M20 4h9v8h-9zM6 22h9v7H6z" fill="#1414e0"/><path d="M25 9L11 24l5-9-2-2z" fill="#f8e018" stroke="#554400"/></svg></button>
    <button class="app" aria-label="Word"><svg viewBox="0 0 36 36"><path d="M9 1h26v9H9z" fill="#41a5ee"/><path d="M9 10h26v9H9z" fill="#2b7cd3"/><path d="M9 19h26v8H9z" fill="#185abd"/><path d="M9 27h26v8H9z" fill="#103f91"/><rect y="8" width="19" height="20" rx="2" fill="#1c55b4"/><text x="9" y="23" text-anchor="middle" font-family="Open Sans, sans-serif" font-weight="700" font-size="14" fill="#fff">W</text></svg></button>
    <button class="app" aria-label="Visual Studio Code"><svg viewBox="0 0 36 36"><path d="M3 11l24 19M3 24L27 5" stroke="#1182d0" stroke-width="6" stroke-linecap="round"/><path d="M26 0l10 4v28l-10 4z" fill="#2aa4ee"/></svg></button>
    <button class="app on" aria-label="Browser"><svg viewBox="0 0 36 36"><ellipse cx="17" cy="18" rx="17" ry="17" fill="#1b7ab0"/><ellipse cx="19" cy="16" rx="14" ry="13" fill="#7cc4ec"/><path d="M2 6q14 2 20 25l-8-2Q8 14 1 13z" fill="#fff"/><path d="M22 15l5 2 8 2-1 10-10 3-5-6z" fill="#0c5c94"/></svg></button>
    <button class="app on" aria-label="PDF Reader"><svg viewBox="0 0 36 36"><path d="M0 0h27l9 9v27H0z" fill="#f58a1e"/><path d="M27 0v9h9z" fill="#ffe4c8"/><path d="M23 6q-12-2-13 8 0 9 8 9 7-1 7-8h-6q-1 4-3 4" fill="none" stroke="#fff" stroke-width="3"/><text x="18" y="34" text-anchor="middle" font-family="Open Sans, sans-serif" font-weight="700" font-size="8" fill="#fff">PDF</text></svg></button>
    <button class="app active" aria-label="ModelSim"><svg viewBox="0 0 36 36"><path d="M1 1h34v7H1z" fill="#1020e8"/><path d="M3 36V13h8l7 11 7-11h8v23h-7V23l-8 11-8-11v13z" fill="#0a0a0a"/></svg></button>
  </div>
  <div class="tray">
    <button class="t49" aria-label="Show hidden icons"><svg viewBox="0 0 24 24"><path d="M4 16l8-8 8 8" fill="none" stroke="#222" stroke-width="2"/></svg></button>
    <button class="t49" aria-label="OneDrive"><svg viewBox="0 0 24 24"><path d="M6 19q-5 0-5-5t5-5q2-5 7-5 5 1 6 6 4 1 4 5t-4 4z" fill="#999" stroke="#333" stroke-width="1.500"/><path d="M3 17l11-6 8 6-3 2H6z" fill="#f4f0f0"/></svg></button>
    <button class="t49" aria-label="Bluetooth"><svg viewBox="0 0 24 24"><rect x="3" width="18" height="24" rx="9" fill="#1284f0"/><path d="M7 8l9 8-4 4V4l4 4-9 8" fill="none" stroke="#fff" stroke-width="1.600"/></svg></button>
    <span class="eng">ENG</span>
    <button class="t37" aria-label="Network"><svg viewBox="0 0 24 24"><path d="M1 8q11-9 22 0M4 12q8-7 16 0M7 16q5-4 10 0" fill="none" stroke="#222" stroke-width="1.800"/><circle cx="12" cy="19" r="2.200" fill="#222"/></svg></button>
    <button class="t37" aria-label="Volume"><svg viewBox="0 0 24 24"><path d="M1 9h4l6-5v16l-6-5H1z" fill="none" stroke="#222" stroke-width="1.600"/><path d="M14 8q3 4 0 8" fill="none" stroke="#222" stroke-width="1.600"/><path d="M17 6q4 6 0 12M20 4q5 8 0 16" fill="none" stroke="#aaa" stroke-width="1.400"/></svg></button>
    <button class="t37" aria-label="Battery"><svg viewBox="0 0 24 24"><rect x="2" y="5" width="19" height="14" rx="3" fill="none" stroke="#222" stroke-width="1.800"/><path d="M5 11l8-4h6v10H5z" fill="#111"/><path d="M22 9h2v5h-2z" fill="#222"/><path d="M5 0L0 8h4l-1 6 6-8H5z" fill="#111"/></svg></button>
    <time>12:16 PM<br>6/26/2023</time>
    <span class="badge">4</span>
  </div>
</footer>
</body>
</html>
```
FILE: styles.css
```css
* { box-sizing: border-box; }
body {
  margin: 0;
  min-height: 100vh;
  display: flex;
  flex-direction: column;
  background: #f0f0f0;
  color: #111;
  font: 16px/20px "DejaVu Sans Condensed", "DejaVu Sans", sans-serif;
}
button { border: 0; padding: 0; margin: 0; background: none; font: inherit; color: inherit; display: flex; align-items: center; justify-content: center; }
h1, h2, p, ul { margin: 0; padding: 0; font-weight: 400; }
ul { list-style: none; }
.sprite { display: none; }
.appico { width: 24px; height: 24px; flex: none; }

.titlebar { height: 36px; display: flex; align-items: center; gap: 7px; padding-left: 4px; background: #f9f0ed; border-bottom: 1px solid #e4dcda; }
.titlebar h1 { font: 17px/24px "Open Sans", sans-serif; flex: 1; }
.winctl { display: flex; padding-right: 4px; }
.winctl button { width: 71px; height: 35px; }
.winctl svg { width: 16px; height: 16px; }

.menu { height: 30px; display: flex; align-items: center; gap: 22px; padding: 0 0 1px 11px; background: #fff; font: 17px/24px "Open Sans", sans-serif; }

.dock { height: 31px; display: flex; align-items: center; gap: 5px; padding: 2px 7px 1px 5px; background: #9ab4d1; border-top: 2px solid #a8a8a8; border-bottom: 1px solid #8a8a8a; }
.dock h2 { font-size: 16px; color: #222; }
.grip { flex: 1; height: 14px; margin-left: 9px; display: flex; justify-content: center; background: linear-gradient(#bfe0f0 0 3px, #34485c 3px 6px, #9ab4d1 6px 8px, #bfe0f0 8px 11px, #34485c 11px); }
.grip span { width: 36px; background: repeating-linear-gradient(110deg, #9ab4d1 0 3px, #e4f4fc 3px 4px, #34485c 4px 5px); }
.dock button { width: 20px; height: 20px; background: #f0f0f0; border: 1px solid #fff; border-right-color: #666; border-bottom-color: #666; }
.dock button svg { width: 14px; height: 14px; }

.toolbars { padding: 0 5px; height: 102px; border-bottom: 4px solid #e4e4e4; }
.row { display: flex; gap: 2px; height: 49px; }
.group { display: flex; align-items: center; padding-left: 18px; border-right: 2px solid #8c8c8c; border-bottom: 2px solid #8c8c8c; position: relative; }
.group::before { content: ""; position: absolute; left: 2px; top: 4px; bottom: 3px; width: 5px; border: solid #8c8c8c; border-width: 0 2px 2px 0; }
.g522 { width: 522px; padding-left: 17px; }
.g193 { width: 193px; }
.g640 { width: 640px; }
.g257 { width: 257px; }
.g235 { width: 235px; }
.g274 { width: 274px; }
.g293 { width: 293px; padding-left: 16px; }
.g557 { width: 557px; }
.g228 { width: 228px; padding-left: 21px; }
.g295 { width: 295px; }
.tb { width: 33px; height: 30px; flex: none; }
.wide .tb { width: 34px; }
.tb svg { width: 24px; height: 24px; }
.tb.up, .tb.down { width: 31px; margin: 3px 4px 0; border: 1px solid #fff; border-right: 2px solid #909090; border-bottom: 2px solid #909090; }
.tb.down { background: #fff; border-color: #aaa #fff #fff #aaa; }
.tb.nar { width: 30px; }
.car { width: 14px; height: 30px; flex: none; }
.car svg, .dd { width: 10px; height: 10px; flex: none; }
.sep { width: 21px; height: 24px; flex: none; background: repeating-linear-gradient(#888 0 2px, #f0f0f0 2px 3px) center / 2px 24px no-repeat; }
.len { width: 91px; height: 28px; margin: 0 2px 0 6px; padding: 2px 1px 0 4px; border: 2px solid; border-color: #8c8c8c #fff #fff #8c8c8c; background: #fff; text-align: right; font: 18px/24px "Liberation Mono", monospace; color: #222; }
.spin { display: flex; flex-direction: column; width: 20px; margin-right: 8px; }
.spin button { height: 14px; border: 1px solid #fff; border-right-color: #888; border-bottom-color: #888; }
.spin svg { width: 11px; height: 9px; }
.group label { margin-left: 5px; color: #222; }
.find { width: 177px; height: 28px; margin: 0 5px 0 11px; border: 2px solid; border-color: #8c8c8c #fff #fff #8c8c8c; background: #fff; font: inherit; }
.drop { width: 25px; height: 26px; margin-right: 6px; border: 1px solid #fff; border-right: 2px solid #888; border-bottom: 2px solid #888; }
.drop svg { width: 18px; height: 10px; }
.drop + .nar + .nar { margin-right: 6px; }

.panes { flex: 1; display: grid; grid-template-columns: 241px 154px 1fr 26px; grid-template-rows: 29px 1fr 60px 28px; gap: 4px; padding: 0 6px 0 6px; background: #f4f4f4; }
.head, .gray { background: #808080; color: #f0f0f0; }
.head { display: flex; align-items: center; padding: 2px 9px 0 14px; gap: 4px; }
.head .dd { margin-top: 6px; }
.head.right { justify-content: flex-end; }
.shapes { width: 26px; height: 24px; }
.black { background: #000; overflow: hidden; }

.names, .values { background: #808080; color: #e6e6e6; }
.names { border-left: 12px solid #fff; }
li { height: 26px; display: flex; align-items: center; white-space: nowrap; position: relative; }
.names li { padding-left: 8px; }
.values li { padding-left: 3px; }
li.clk { height: 30px; }
li.sin { height: 112px; background: #fff; color: #222; }
li.ins::after { content: ""; position: absolute; left: 4px; right: 6px; bottom: 0; height: 2px; background: #000; }
.names li.ins::before { content: ""; position: absolute; left: 2px; bottom: -4px; border: 5px solid transparent; border-left: 6px solid #222; border-right: 0; }
.box { width: 16px; height: 16px; margin-right: 6px; flex: none; background: #fff; border: 1px solid #a0a8b8; border-radius: 2px; color: #000; font-size: 16px; line-height: 14px; font-weight: 700; }
.box.none { visibility: hidden; }
.gem { width: 24px; height: 24px; margin-right: 7px; flex: none; }

.wave { position: relative; background: #000; overflow: hidden; }
.plot { position: absolute; inset: 0; width: 100%; height: 100%; }
.bus { fill: #dcdcdc; font-size: 16px; }
.note { position: absolute; left: 140px; top: 326px; width: 422px; height: 174px; padding: 6px 16px 0 1px; background: #fff; border: 2px solid #fff; box-shadow: inset 0 0 0 1px #c4c4c4; color: #000; font: 22px/37px "Liberation Serif", serif; }

.vscroll { display: flex; flex-direction: column; padding: 2px; border: 1px solid #a0a0a0; background: #fff; }
.vscroll button, .hs button { flex: none; background: #f0f0f0; border: 1px solid #fff; border-right: 3px solid #999; border-bottom: 3px solid #999; }
.vscroll button { height: 22px; }
.vscroll svg { width: 10px; height: 6px; }
.vscroll .thumb { flex: 1; margin: 3px 0; padding-top: 26px; background: #f0f0f0; border-right: 2px solid #999; border-bottom: 2px solid #999; }
.vscroll .thumb span { display: block; height: 112px; background: #fff; }

.foot { background: #808080; color: #e6e6e6; }
.foot > div { display: flex; align-items: center; justify-content: space-between; }
.foot span { flex: 1; text-align: right; padding-right: 15px; }
.now { height: 34px; }
.cur { height: 26px; }
.cur span { background: #fff; color: #222; line-height: 26px; }
.three { width: 52px; height: 20px; margin: 0 7px 0 14px; flex: none; }
.ruler { display: block; width: 100%; height: 60px; }
.times { fill: #00e000; font-size: 16px; text-anchor: middle; }

.hs { display: flex; background: #fff; border-bottom: 2px solid #a0a0a0; }
.hs.first { border-left: 12px solid #808080; border-bottom-color: #808080; }
.hs button { width: 26px; }
.hs svg { width: 8px; height: 12px; }
.hs .thumb { flex: 1; background: #f0f0f0; border: 1px solid #fff; border-right: 3px solid #999; border-bottom: 3px solid #999; }
.gap { width: 8px; }
.trough { flex: 1; background: #f8f8f8; }
.off svg { fill: #a0a0a0; }
.hs.main { border-top: 2px solid #a0a0a0; padding-right: 2px; }
.mark { width: 45px; background: #c6c6c6; border-left: 3px solid #f0c040; }

.status { height: 37px; display: flex; gap: 2px; padding: 4px 4px 5px; border-bottom: 2px solid #c8c8c8; color: #222; line-height: 28px; }
.range, .info { border: 1px solid; border-color: #a0a0a0 #fff #fff #a0a0a0; padding-left: 9px; }
.range { width: 258px; }
.info { flex: 1; padding-left: 7px; }
.status svg { width: 18px; height: 18px; margin: 10px 0 0 2px; }

.taskbar { height: 72px; display: grid; grid-template-columns: 1fr auto 1fr; align-items: center; padding-bottom: 2px; background: linear-gradient(90deg, #dfd9d5, #e2d7d4 25%, #ddd9d6 45%, #e2d7d4 53%, #efdcd1 66%, #eadad2 80%, #e8d6d0); border-top: 1px solid #b4aeac; font: 18px/24px "Open Sans", sans-serif; color: #222; }
.weather { display: flex; align-items: center; gap: 15px; padding-left: 34px; }
.weather svg { width: 30px; height: 30px; }
.weather span { color: #6a6664; }
.apps { display: flex; align-items: center; }
.app { width: 67px; height: 60px; position: relative; }
.app svg { width: 36px; height: 36px; }
.app.on::after, .app.active::after { content: ""; position: absolute; bottom: 0; left: 28px; width: 10px; height: 5px; border-radius: 3px; background: #857b78; }
.app.active { background: linear-gradient(#f6efec, #f6efec) center / 58px 60px no-repeat; }
.app.active::after { left: 21px; width: 25px; background: #1478d4; }
.search { width: 332px; height: 48px; margin: 0 4px 0 7px; padding: 0 3px 0 15px; display: flex; align-items: center; gap: 14px; background: #f6f3f1; border: 1px solid #d0c8c4; border-radius: 24px; overflow: hidden; }
.search input { flex: 1; min-width: 0; border: 0; padding: 0; background: none; font: inherit; color: #222; }
.search input::placeholder { color: #666; opacity: 1; }
.lens { width: 24px; height: 24px; flex: none; }
.art { width: 84px; height: 44px; flex: none; }
.tray { display: flex; align-items: center; justify-content: flex-end; padding-right: 30px; }
.tray svg { width: 24px; height: 24px; }
.t49 { width: 49px; }
.t37 { width: 37px; }
.eng { width: 72px; text-align: center; font-size: 17px; }
time { margin: 0 11px 0 19px; text-align: right; }
.badge { width: 24px; height: 24px; border-radius: 50%; background: #0a66c2; color: #fff; text-align: center; font-size: 14px; }
```
